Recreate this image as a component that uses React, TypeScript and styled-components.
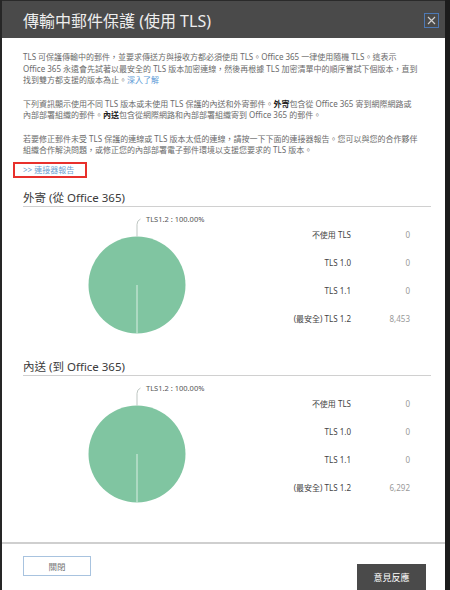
import React from "react";
import styled, { createGlobalStyle } from "styled-components";

const GlobalStyle = createGlobalStyle`
  html, body { margin: 0; padding: 0; background: #fff; }
  body { font-family: "Noto Sans", "Noto Sans CJK TC", sans-serif; }
  #root { width: 450px; height: 590px; }
`;

const Dialog = styled.div`
  box-sizing: border-box;
  width: 450px;
  height: 590px;
  display: flex;
  flex-direction: column;
  border-left: 2px solid #262626;
  border-right: 5px solid #1c1c1c;
  background: #fff;
  overflow: hidden;
`;

const Header = styled.header`
  flex: 0 0 38px;
  box-sizing: border-box;
  display: flex;
  align-items: center;
  justify-content: space-between;
  padding: 0 6px 0 21px;
  background: #4a4a4a;
  border-top: 1px solid #2a2a2a;
`;

const Title = styled.h1`
  margin: 2px 0 0;
  font-size: 16px;
  font-weight: 400;
  color: #eeeeee;
  line-height: 20px;
`;

const CloseIcon = styled.button`
  box-sizing: border-box;
  width: 15px;
  height: 15px;
  padding: 0;
  display: flex;
  align-items: center;
  justify-content: center;
  background: transparent;
  border: 1px solid #4d79b5;
  margin-top: 2px;
`;

const Content = styled.main`
  flex: 1 1 auto;
  box-sizing: border-box;
  padding: 13px 14px 0 21px;
  overflow: hidden;
`;

const Para = styled.p`
  margin: 0 0 12px;
  font-size: 8px;
  line-height: 11.5px;
  color: #6b6b6b;
  white-space: nowrap;
`;

const Strong = styled.strong`
  color: #222;
  font-weight: 700;
`;

const InlineLink = styled.a`
  color: #5a9ad6;
  text-decoration: none;
`;

const ReportLink = styled.a`
  display: inline-block;
  position: relative;
  font-size: 8px;
  line-height: 11.5px;
  color: #6d9fd1;
  text-decoration: none;
  &::after {
    content: "";
    position: absolute;
    left: -10px;
    top: -1.5px;
    width: 74px;
    height: 16px;
    box-sizing: border-box;
    border: 2px solid #e8302c;
  }
`;

const Section = styled.section`
  margin-top: 12px;
`;

const SectionTitle = styled.h2`
  margin: 0;
  font-size: 11.5px;
  font-weight: 400;
  line-height: 16px;
  color: #3a3a3a;
  border-bottom: 1px solid #d0d0d0;
`;

const SectionBody = styled.div`
  display: grid;
  grid-template-columns: 228px 1fr;
  height: 140px;
`;

const Table = styled.div`
  display: grid;
  grid-template-columns: 1fr 59px;
  grid-auto-rows: 28px;
  align-items: center;
  padding: 14px 21px 0 0;
  align-content: start;
`;

const RowLabel = styled.div`
  text-align: right;
  font-size: 8px;
  color: #444;
`;

const RowValue = styled.div`
  text-align: right;
  font-size: 8px;
  color: #999;
`;

const Footer = styled.footer`
  flex: 0 0 45px;
  box-sizing: border-box;
  border-top: 2px solid #cfcfcf;
  display: flex;
  justify-content: space-between;
  align-items: flex-start;
  padding: 12px 19px 0 21px;
`;

const GhostButton = styled.button`
  box-sizing: border-box;
  width: 68px;
  height: 20px;
  background: #fff;
  border: 1px solid #a8c3df;
  color: #777;
  font-family: inherit;
  font-size: 8.5px;
  padding: 0;
`;

const DarkButton = styled.button`
  box-sizing: border-box;
  width: 69px;
  height: 26px;
  margin-top: 8px;
  background: #4a4a4a;
  border: none;
  color: #fff;
  font-family: inherit;
  font-size: 9px;
  padding: 0;
`;

const PieChart: React.FC<{ label: string }> = ({ label }) => (
  <svg width="228" height="140" viewBox="0 0 228 140">
    <circle cx="114" cy="78" r="48.5" fill="#80c5a1" />
    <line x1="114" y1="78" x2="114" y2="126.5" stroke="#d9efe3" strokeWidth="1" />
    <path d="M114 29.5 L114 17.5 Q114 13.5 117.5 12" stroke="#bfc7c3" strokeWidth="1" fill="none" />
    <text x="123" y="15" fontSize="7.5" fill="#555" fontFamily="Noto Sans, sans-serif">
      {label}
    </text>
  </svg>
);

type Row = { label: string; value: string };

const Breakdown: React.FC<{ title: string; rows: Row[] }> = ({ title, rows }) => (
  <Section>
    <SectionTitle>{title}</SectionTitle>
    <SectionBody>
      <PieChart label="TLS1.2 : 100.00%" />
      <Table>
        {rows.map((r) => (
          <React.Fragment key={r.label}>
            <RowLabel>{r.label}</RowLabel>
            <RowValue>{r.value}</RowValue>
          </React.Fragment>
        ))}
      </Table>
    </SectionBody>
  </Section>
);

const outRows: Row[] = [
  { label: "不使用 TLS", value: "0" },
  { label: "TLS 1.0", value: "0" },
  { label: "TLS 1.1", value: "0" },
  { label: "(最安全) TLS 1.2", value: "8,453" },
];

const inRows: Row[] = [
  { label: "不使用 TLS", value: "0" },
  { label: "TLS 1.0", value: "0" },
  { label: "TLS 1.1", value: "0" },
  { label: "(最安全) TLS 1.2", value: "6,292" },
];

export default function App() {
  return (
    <>
      <GlobalStyle />
      <Dialog lang="zh-TW">
        <Header>
          <Title>傳輸中郵件保護 (使用 TLS)</Title>
          <CloseIcon aria-label="關閉">
            <svg width="9" height="9" viewBox="0 0 9 9">
              <path d="M1 1 L8 8 M8 1 L1 8" stroke="#d0d0d0" strokeWidth="1.2" />
            </svg>
          </CloseIcon>
        </Header>
        <Content>
          <Para>
            TLS 可保護傳輸中的郵件，並要求傳送方與接收方都必須使用 TLS。Office 365 一律使用隨機 TLS。這表示
            <br />
            Office 365 永遠會先試著以最安全的 TLS 版本加密連線，然後再根據 TLS 加密清單中的順序嘗試下個版本，直到
            <br />
            找到雙方都支援的版本為止。<InlineLink href="#">深入了解</InlineLink>
          </Para>
          <Para>
            下列資訊顯示使用不同 TLS 版本或未使用 TLS 保護的內送和外寄郵件。<Strong>外寄</Strong>包含從 Office 365 寄到網際網路或
            <br />
            內部部署組織的郵件。<Strong>內送</Strong>包含從網際網路和內部部署組織寄到 Office 365 的郵件。
          </Para>
          <Para style={{ marginBottom: 0 }}>
            若要修正郵件未受 TLS 保護的連線或 TLS 版本太低的連線，請按一下下面的連接器報告。您可以與您的合作夥伴
            <br />
            組織合作解決問題，或修正您的內部部署電子郵件環境以支援您要求的 TLS 版本。
          </Para>
          <ReportLink href="#">&gt;&gt; 連接器報告</ReportLink>
          <Breakdown title="外寄 (從 Office 365)" rows={outRows} />
          <Breakdown title="內送 (到 Office 365)" rows={inRows} />
        </Content>
        <Footer>
          <GhostButton>關閉</GhostButton>
          <DarkButton>意見反應</DarkButton>
        </Footer>
      </Dialog>
    </>
  );
}
